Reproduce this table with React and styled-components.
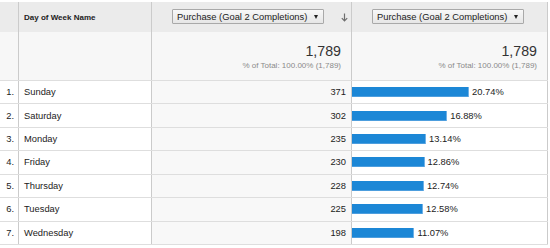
import React from "react";
import styled, { createGlobalStyle } from "styled-components";

const Global = createGlobalStyle`
  html, body { margin: 0; padding: 0; background: #fff; }
  body { font-family: "Liberation Sans", Arial, sans-serif; color: #222; }
`;

const COLS = "19px 133px 200px 196px";
const PX_PER_PCT = 5.64;

const Table = styled.div`
  width: 548px;
  margin-top: 2px;
`;

const Row = styled.div`
  display: grid;
  grid-template-columns: ${COLS};
  height: ${(p) => p.$h}px;
  box-sizing: border-box;
  background: ${(p) => p.$bg || "#fff"};
  border-bottom: ${(p) => (p.$line ? "1px solid #dedede" : "none")};
`;

const Cell = styled.div`
  display: flex;
  align-items: ${(p) => p.$align || "center"};
  justify-content: ${(p) => p.$justify || "flex-start"};
  box-sizing: border-box;
  border-right: 1px solid #cbcbcb;
  padding: ${(p) => p.$pad || "0"};
  background: ${(p) => p.$bg || "transparent"};
  min-width: 0;
  position: relative;
`;

const HeadLabel = styled.span`
  font-size: 8px;
  font-weight: bold;
  color: #222;
`;

const Dropdown = styled.div`
  display: flex;
  align-items: center;
  height: 15px;
  box-sizing: border-box;
  padding: 0 5px 0 4px;
  border: 1px solid #a9a9a9;
  border-radius: 1px;
  background: linear-gradient(#f8f8f8, #e6e6e6);
  font-size: 9.35px;
  color: #222;
  white-space: nowrap;
  gap: 7px;
`;

const Caret = styled.span`
  width: 0;
  height: 0;
  border-left: 2.5px solid transparent;
  border-right: 2.5px solid transparent;
  border-top: 4px solid #222;
`;

const SortArrow = styled.svg`
  position: absolute;
  right: 3px;
  top: 11px;
`;

const TotalBox = styled.div`
  display: flex;
  flex-direction: column;
  align-items: flex-end;
`;

const BigNum = styled.span`
  font-size: 14.2px;
  color: #333;
  line-height: 14px;
`;

const SubNum = styled.span`
  font-size: 8px;
  color: #8a8a8a;
  margin-top: 3px;
`;

const Text = styled.span`
  font-size: 9.35px;
  color: #222;
  white-space: nowrap;
`;

const Bar = styled.div`
  height: 10px;
  background: #1c87d6;
  box-shadow: inset -1px 0 0 #6fb1e6, inset 0 -1px 0 #4d9ede;
  margin-right: 3px;
`;

const rows = [
  ["Sunday", 371, 20.74],
  ["Saturday", 302, 16.88],
  ["Monday", 235, 13.14],
  ["Friday", 230, 12.86],
  ["Thursday", 228, 12.74],
  ["Tuesday", 225, 12.58],
  ["Wednesday", 198, 11.07],
];

export default function App() {
  return (
    <>
      <Global />
      <Table>
        <Row $h={30} $bg="#ebebeb">
          <Cell />
          <Cell $pad="0 0 0 5px">
            <HeadLabel>Day of Week Name</HeadLabel>
          </Cell>
          <Cell $pad="7px 0 0 20px" $align="flex-start">
            <Dropdown>
              Purchase (Goal 2 Completions) <Caret />
            </Dropdown>
            <SortArrow width="7" height="9" viewBox="0 0 7 9">
              <path d="M3.5 0.5 V8 M0.8 5.2 L3.5 8 L6.2 5.2" stroke="#6e6e6e" strokeWidth="1.2" fill="none" />
            </SortArrow>
          </Cell>
          <Cell $pad="7px 0 0 20px" $align="flex-start">
            <Dropdown>
              Purchase (Goal 2 Completions) <Caret />
            </Dropdown>
          </Cell>
        </Row>
        <Row $h={49} $bg="#f7f7f7" $line>
          <Cell />
          <Cell />
          <Cell $justify="flex-end" $align="flex-start" $pad="12px 10px 0 0">
            <TotalBox>
              <BigNum>1,789</BigNum>
              <SubNum>% of Total: 100.00% (1,789)</SubNum>
            </TotalBox>
          </Cell>
          <Cell $justify="flex-end" $align="flex-start" $pad="12px 10px 0 0">
            <TotalBox>
              <BigNum>1,789</BigNum>
              <SubNum>% of Total: 100.00% (1,789)</SubNum>
            </TotalBox>
          </Cell>
        </Row>
        {rows.map(([name, count, pct], i) => (
          <Row key={name} $h={23.43} $line>
            <Cell $justify="flex-end" $pad="0 4px 0 0">
              <Text>{i + 1}.</Text>
            </Cell>
            <Cell $pad="0 0 0 5px">
              <Text>{name}</Text>
            </Cell>
            <Cell $justify="flex-end" $pad="0 5px 0 0" $bg="#f8f8f8">
              <Text>{count}</Text>
            </Cell>
            <Cell>
              <Bar style={{ width: `${(pct * PX_PER_PCT).toFixed(1)}px` }} />
              <Text>{pct.toFixed(2)}%</Text>
            </Cell>
          </Row>
        ))}
      </Table>
    </>
  );
}
